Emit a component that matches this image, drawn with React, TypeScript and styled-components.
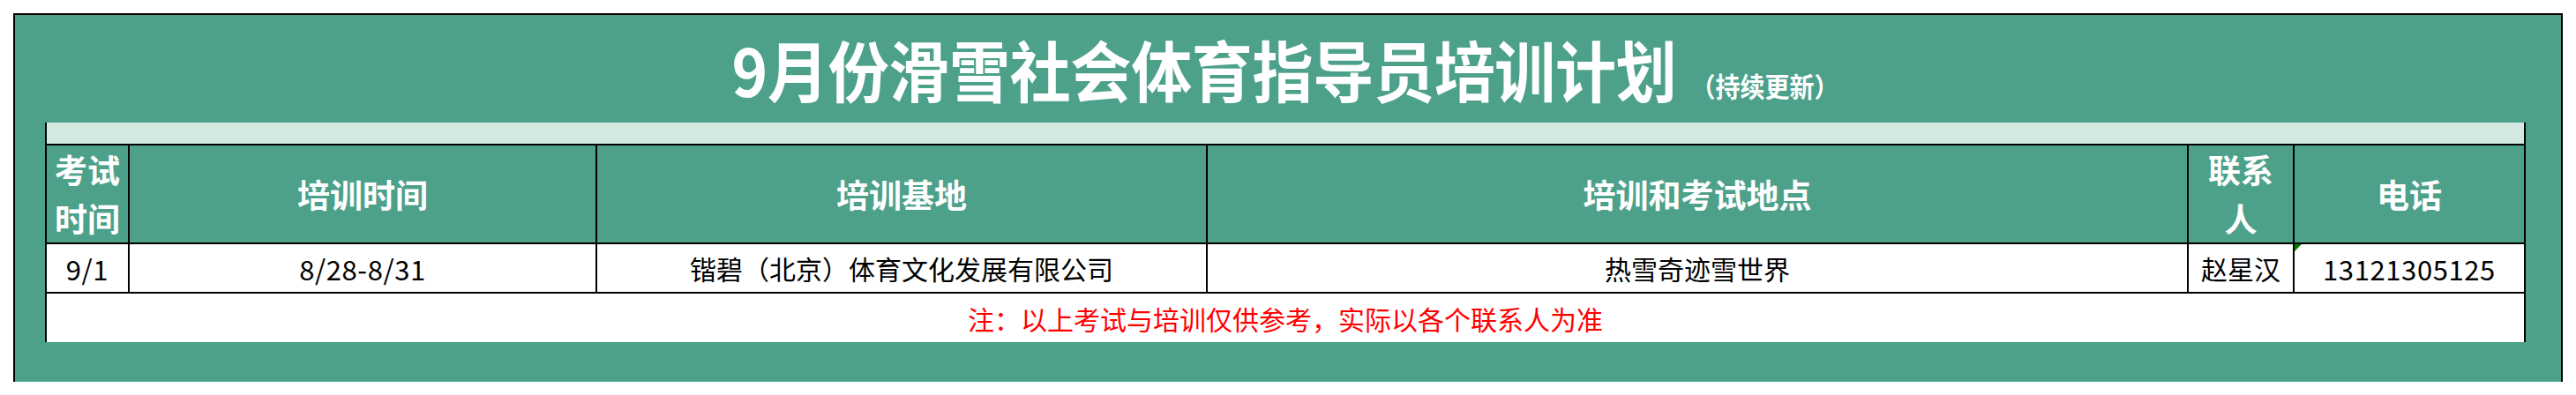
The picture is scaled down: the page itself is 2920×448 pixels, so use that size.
import styled, { createGlobalStyle } from 'styled-components';

const GREEN = '#4da18a';
const BAND = '#d2e8e1';

const Global = createGlobalStyle`
  html, body { margin: 0; padding: 0; background: #fff; }
  body { font-family: "Noto Sans CJK SC", "Noto Sans", sans-serif; }
`;

const Frame = styled.div`
  box-sizing: border-box; margin: 15px 0 0 15px; width: 2890px; height: 418px;
  border: 2px solid #000; border-bottom: none; background: ${GREEN};
  padding: 0 40px 0 34px; display: flex; flex-direction: column;
`;
const TitleBar = styled.div` height: 122px; display: flex; align-items: center; justify-content: center; `;
const Title = styled.div` display: flex; align-items: baseline; color: #fff; font-weight: 700; line-height: 1; transform: scaleY(1.08); `;
const Main = styled.span` font-size: 69px; letter-spacing: -0.3px; `;
const Sub = styled.span` font-size: 28px; margin-left: 16px; `;

const Sheet = styled.div` box-sizing: border-box; width: 2812px; border-left: 2px solid #000; border-right: 2px solid #000; background: #fff; `;
const Band = styled.div` height: 24px; background: ${BAND}; `;
const Grid = styled.div`
  display: grid; grid-template-columns: 92px 528px 690px 1110px 118px 260px;
  grid-template-rows: 110px 54px; gap: 2px; padding: 2px 0; background: #000;
`;
const Cell = styled.div<{ $head?: boolean; $flag?: boolean; $num?: boolean }>`
  position: relative; display: flex; align-items: center; justify-content: center; text-align: center;
  background: ${(p) => (p.$head ? GREEN : '#fff')};
  color: ${(p) => (p.$head ? '#fff' : '#000')};
  font-size: ${(p) => (p.$head ? '37px' : p.$num ? '31px' : '30px')};
  letter-spacing: ${(p) => (p.$num ? '0.6px' : '0')};
  font-weight: ${(p) => (p.$head ? 700 : 400)};
  line-height: ${(p) => (p.$head ? '55px' : '1')};
  &::before {
    content: ''; display: ${(p) => (p.$flag ? 'block' : 'none')};
    position: absolute; left: 0; top: 0; width: 0; height: 0;
    border-top: 8px solid #008000; border-right: 8px solid transparent;
  }
`;
const Note = styled.div` height: 55px; display: flex; align-items: center; justify-content: center; color: #ff0000; font-size: 30px; `;

const heads = [['考试', '时间'], ['培训时间'], ['培训基地'], ['培训和考试地点'], ['联系', '人'], ['电话']];
const row = ['9/1', '8/28-8/31', '锴碧（北京）体育文化发展有限公司', '热雪奇迹雪世界', '赵星汉', '13121305125'];

export default function App() {
  return (
    <>
      <Global />
      <Frame>
        <TitleBar>
          <Title>
            <Main>9月份滑雪社会体育指导员培训计划</Main>
            <Sub>（持续更新）</Sub>
          </Title>
        </TitleBar>
        <Sheet>
          <Band />
          <Grid>
            {heads.map((h, i) => (
              <Cell key={'h' + i} $head>
                <div>{h.map((l, j) => (<div key={j}>{l}</div>))}</div>
              </Cell>
            ))}
            {row.map((t, i) => (
              <Cell key={'d' + i} $flag={i === 5} $num={i === 0 || i === 1 || i === 5}>{t}</Cell>
            ))}
          </Grid>
          <Note>注：以上考试与培训仅供参考，实际以各个联系人为准</Note>
        </Sheet>
      </Frame>
    </>
  );
}
